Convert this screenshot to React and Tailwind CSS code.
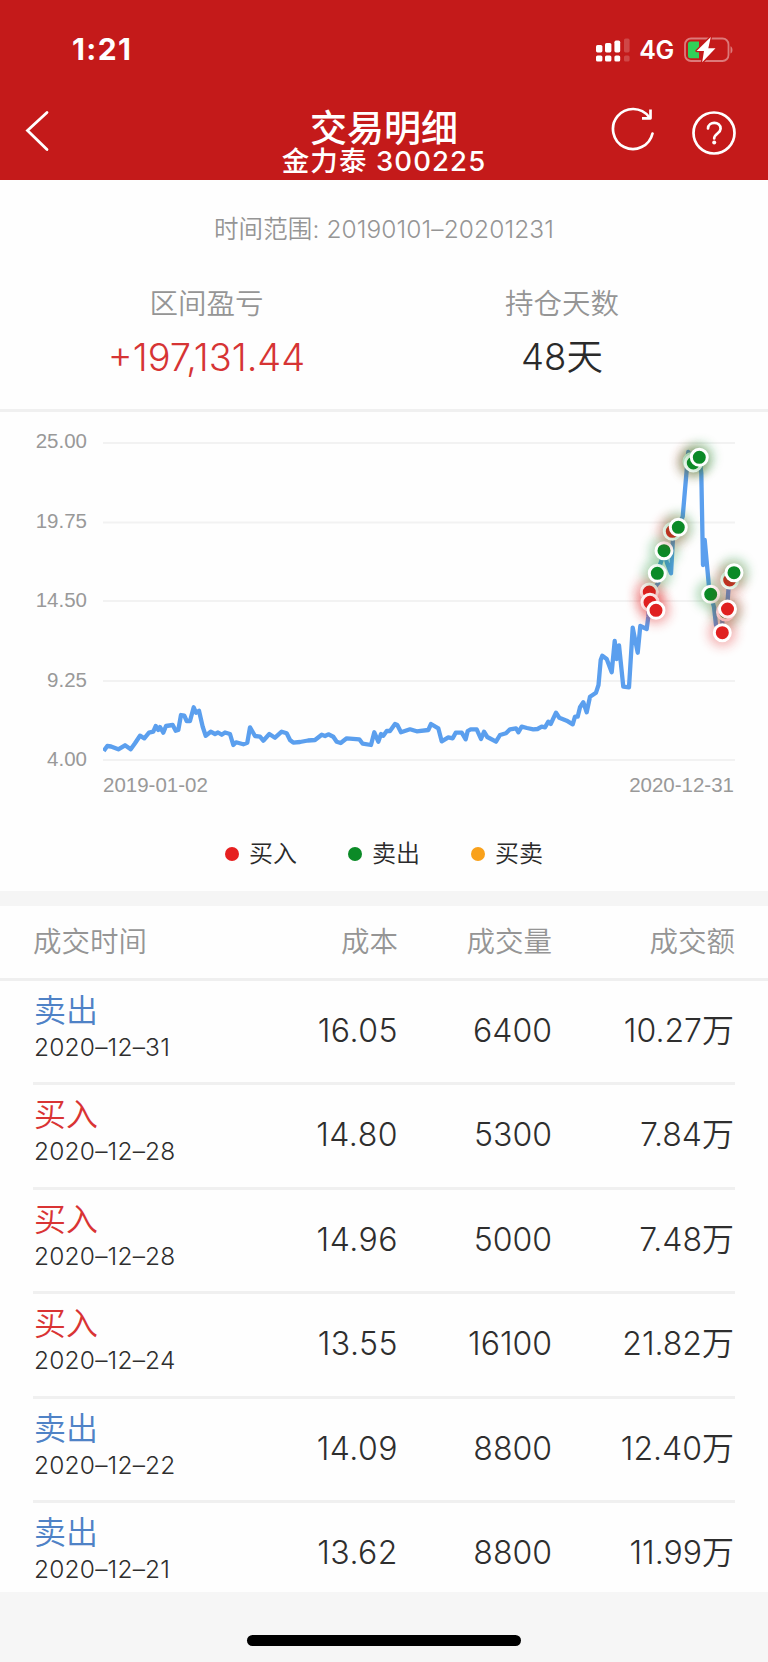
const FONT = "font-['Inter','Noto_Sans_CJK_SC',sans-serif]";

const trades = [
  { side: "sell", date: "2020–12–31", cost: "16.05", volume: "6400", amount: "10.27" },
  { side: "buy", date: "2020–12–28", cost: "14.80", volume: "5300", amount: "7.84" },
  { side: "buy", date: "2020–12–28", cost: "14.96", volume: "5000", amount: "7.48" },
  { side: "buy", date: "2020–12–24", cost: "13.55", volume: "16100", amount: "21.82" },
  { side: "sell", date: "2020–12–22", cost: "14.09", volume: "8800", amount: "12.40" },
  { side: "sell", date: "2020–12–21", cost: "13.62", volume: "8800", amount: "11.99" },
];

const gridLines = [443, 522.5, 601, 681, 760];
const yLabels = ["25.00", "19.75", "14.50", "9.25", "4.00"];

const pricePoints =
  "103.7,751 107.3,746 111,746.5 115,748 118.3,749.3 125,745.3 130.7,749.3 135,743.3 140,735.7 144.3,738.3 149,732.7 153.3,731.7 155.7,726 158.3,730 160,727 163.3,732.7 166,726 172.7,725 175.7,730.7 178.3,730 181,715 184.3,715.7 186.7,721 190,721 193.7,707.3 196,712.7 199,710.7 202.7,726.7 205.7,735.7 210.7,731.7 215,734 218,732.5 221.7,734.7 225,732.5 230,734 233.3,745 236,742.3 243.3,744.3 247.3,742.7 250,727.3 255,736 260,736.7 263.3,740.7 269.3,734 275,737.7 281.7,731.7 286.7,733.3 290,740 293.3,742.7 300,742 308,740.5 315,740 321.7,734.7 325,736 328.3,734.3 333.3,736.7 336.7,741.7 340.7,743 346.7,738.3 353,738.8 359.3,739.3 362.7,743.7 371,745 374.3,732.3 378.3,741.7 381,734 383.3,735.7 386.7,731 390,731 395,724 397.3,725 401,732.3 410,729.3 416.7,731.3 428.3,730 431,724 438.3,728.3 441.7,741.3 448.3,737.3 452.7,738.3 455.7,732.7 461.7,732.7 465.7,739.3 467.7,731 470.7,729.3 476.7,729.3 481,739 484,731.7 487.3,737 496,741.7 500,735 506,733.3 510,729.3 516,728.3 518.3,732.3 521.7,726.7 527,728 533.3,729.3 537.5,729 541.7,726.7 545,727.3 548.3,721.7 550.7,724 556,712.7 559.3,717.7 566.7,720.7 572.7,724.3 575,716.7 577.7,716.7 580,707.3 583.3,702.3 586.7,712.3 590,696.7 596,692.7 598.5,685 600.7,660 602.3,655.7 606.7,659 611.7,672.3 614.7,641 616.7,659 619,645.3 623.3,686.7 629,687.3 632.7,627.7 637.7,652.7 640.3,626 646.7,629 648.3,616.7 650,593 658.3,583 657,573 661.7,560 664,551 667,563 671,573.3 673.3,533 678,527 682.7,516.7 684.3,498 686.7,470 688.3,452 693,463 699.3,457 701.3,473 703,565 704.7,540 709.3,590 714,607 716,625 722,632.7 722.5,617 727,609 729,582 734,572.7";

const markers = [
  [649.3, 592, "buy"],
  [650, 602.3, "buy"],
  [656, 610.3, "buy"],
  [657.3, 573.3, "sell"],
  [664, 550.7, "sell"],
  [672.3, 531.3, "buy"],
  [678.3, 527.3, "sell"],
  [692, 461.5, "buy"],
  [693.3, 463, "sell"],
  [699.3, 457.3, "sell"],
  [710.7, 594.3, "sell"],
  [725.5, 612, "sell"],
  [727.5, 609, "buy"],
  [722.3, 632.7, "buy"],
  [729.7, 580, "buy"],
  [734, 572.7, "sell"],
];

const markerColor = { buy: "#e02020", sell: "#0b8a27" };

function SignalIcon() {
  return (
    <svg width="34" height="24" viewBox="0 0 34 24" fill="#fff">
      <rect x="0" y="7" width="6.4" height="7.4" rx="1.6" />
      <rect x="9" y="5" width="6.4" height="9.4" rx="1.6" />
      <rect x="18.4" y="2.6" width="5.8" height="11.8" rx="1.6" />
      <rect x="28" y="0.6" width="5.6" height="13.8" rx="1.6" opacity=".2" />
      <rect x="0" y="17.4" width="6.4" height="6.2" rx="1.6" />
      <rect x="9" y="17.4" width="6.4" height="6.2" rx="1.6" />
      <rect x="18.4" y="17.4" width="5.8" height="6.2" rx="1.6" />
      <rect x="28" y="17.4" width="5.6" height="6.2" rx="1.6" opacity=".2" />
    </svg>
  );
}

function BatteryIcon() {
  return (
    <svg width="50" height="26" viewBox="0 0 50 26" fill="none">
      <rect x="1" y="1.5" width="43.5" height="22.5" rx="6" stroke="#fff" strokeOpacity=".42" strokeWidth="1.8" />
      <path d="M46.5 9.2c2.6 1 2.6 6.4 0 7.4z" fill="#fff" fillOpacity=".42" />
      <path d="M6.5 4.5H15v16.8H6.5a2.5 2.5 0 0 1-2.5-2.5V7a2.5 2.5 0 0 1 2.5-2.5z" fill="#30d158" />
      <path
        d="M26.8 0 12.6 13.9H20L18.2 25.3 31.5 11.3H24.3z"
        fill="#fff"
        stroke="#c41a1a"
        strokeWidth="2.6"
        strokeLinejoin="round"
        paintOrder="stroke"
      />
    </svg>
  );
}

function Header() {
  return (
    <header className="h-[180px] bg-[#c41a1a] text-white">
      <div className="flex h-[98px] items-center justify-between pl-[72px] pr-[34px]">
        <span className="text-[30px] font-bold tracking-[1.4px]">1:21</span>
        <div className="flex items-center pt-[2px]">
          <SignalIcon />
          <span className="ml-[9px] mr-[10px] text-[25px] font-semibold leading-none tracking-[-0.3px]">4G</span>
          <BatteryIcon />
        </div>
      </div>
      <div className="grid grid-cols-[1fr_auto_1fr] px-[31px]">
        <svg width="26" height="42" viewBox="0 0 26 42" fill="none" className="-ml-[7px] mt-[12px]">
          <path d="M23 2.5 3.5 20.5 23 39.5" stroke="#fff" strokeWidth="2.8" strokeLinecap="round" />
        </svg>
        <div className="flex flex-col items-center pt-[12px]">
          <h1 className="text-[37px] font-medium leading-[37px]">交易明细</h1>
          <p className="mt-px whitespace-nowrap text-[27.5px] font-medium leading-[26px] tracking-[1.1px]">
            金力泰 300225
          </p>
        </div>
        <div className="flex justify-end gap-[34px]">
          <svg width="46" height="46" viewBox="0 0 46 46" fill="none" stroke="#fff" strokeWidth="2.7" className="mt-[7px]">
            <path d="M41.5 28.5A20 20 0 1 1 38 12" strokeLinecap="round" />
            <path d="M39.5 4.5v8.8H31" strokeLinejoin="round" />
          </svg>
          <svg width="46" height="46" viewBox="0 0 46 46" fill="none" stroke="#fff" strokeWidth="2.7" className="mt-[12px]">
            <circle cx="23" cy="23" r="20.5" />
            <path d="M17 18.5c.2-7.6 12.6-7.4 12.6.2 0 4.6-6.400 5-6.4 9.800" strokeLinecap="round" />
            <circle cx="23.2" cy="32.5" r="2" fill="#fff" stroke="none" />
          </svg>
        </div>
      </div>
    </header>
  );
}

function Summary() {
  return (
    <section className="h-[232px] border-b-[3px] border-[#f0f0f0] text-center">
      <p className="pt-[33px] text-[24.5px] font-[350] leading-[32px] tracking-[0.1px] text-[#959595]">
        时间范围: 20190101–20201231
      </p>
      <div className="mt-[41px] grid grid-cols-[413px_298px] font-[350]">
        <div>
          <p className="text-[28.5px] leading-[36px] text-[#959595]">区间盈亏</p>
          <p className="mt-[13px] text-[38px] leading-[44px] text-[#d63434]">+197,131.44</p>
        </div>
        <div>
          <p className="text-[28.5px] leading-[36px] text-[#959595]">持仓天数</p>
          <p className="mt-[13px] text-[36.5px] leading-[44px] text-[#2a2a2a]">48天</p>
        </div>
      </div>
    </section>
  );
}

function Chart() {
  return (
    <div className="pt-[13px] font-['Liberation_Sans',sans-serif] text-[20.5px] text-[#999]">
      <div className="flex">
        <div className="flex h-[350px] w-[103px] flex-col justify-between pb-[5px] pr-[16px] pt-[5px] text-right leading-[22px]">
          {yLabels.map((label) => (
            <span key={label}>{label}</span>
          ))}
        </div>
        <svg width="665" height="350" viewBox="103 425 665 350" fill="none">
          <defs>
            <filter id="glow" x="-100%" y="-100%" width="300%" height="300%">
              <feGaussianBlur stdDeviation="5.5" />
            </filter>
          </defs>
          {gridLines.map((y) => (
            <path key={y} d={`M103 ${y}H735`} stroke="#f2f2f2" strokeWidth="2" />
          ))}
          <polyline points={pricePoints} stroke="#5b9fee" strokeWidth="4.3" strokeLinejoin="round" />
          {markers.map(([x, y, side]) => (
            <g key={`${x}-${y}`}>
              <circle cx={x} cy={y} r="14" fill={markerColor[side]} opacity=".33" filter="url(#glow)" />
              <circle cx={x} cy={y} r="8" fill={markerColor[side]} stroke="#fff" strokeWidth="3" />
            </g>
          ))}
        </svg>
      </div>
      <div className="-mt-px flex justify-between pl-[103px] pr-[34px] leading-[22px]">
        <span>2019-01-02</span>
        <span>2020-12-31</span>
      </div>
    </div>
  );
}

function Legend() {
  return (
    <div className="mt-[42px] flex h-[32px] items-center justify-center gap-[51px] text-[24px] font-[350] text-[#2a2a2a]">
      <div className="flex items-center gap-[10px]">
        <i className="size-[14px] rounded-full bg-[#e62020]" />
        买入
      </div>
      <div className="flex items-center gap-[10px]">
        <i className="size-[14px] rounded-full bg-[#0b8a27]" />
        卖出
      </div>
      <div className="flex items-center gap-[10px]">
        <i className="size-[14px] rounded-full bg-[#f9a11b]" />
        买卖
      </div>
    </div>
  );
}

function TradeRow({ trade, last }) {
  const isBuy = trade.side === "buy";

  return (
    <li
      className={`grid h-[104.4px] grid-cols-[200px_165px_154px_1fr] text-right text-[32px] font-[350] text-[#2e2e2e] ${
        last ? "" : "border-b-[3px] border-[#f0f0f0]"
      }`}
    >
      <div className="pl-px pt-[10px] text-left">
        <p className={`text-[32px] leading-[40px] ${isBuy ? "text-[#d93434]" : "text-[#4f82c6]"}`}>
          {isBuy ? "买入" : "卖出"}
        </p>
        <p className="-mt-px text-[24.5px] leading-[34px] tracking-[0.2px]">{trade.date}</p>
      </div>
      <span className="pt-[25px] leading-[50px] tracking-[0.5px]">{trade.cost}</span>
      <span className="pt-[25px] leading-[50px]">{trade.volume}</span>
      <span className="pr-px pt-[25px] leading-[50px]">{trade.amount}万</span>
    </li>
  );
}

function App() {
  return (
    <div className={`flex h-[1662px] w-[768px] flex-col overflow-hidden bg-[#fefefe] ${FONT}`}>
      <Header />
      <Summary />
      <section className="h-[494px] shrink-0 border-b-[15px] border-[#f5f5f5]">
        <Chart />
        <Legend />
      </section>
      <div className="grid h-[75px] shrink-0 grid-cols-[200px_165px_154px_1fr] items-center border-b-[3px] border-[#efefef] px-[33px] pt-px text-right text-[28.5px] font-[350] text-[#959595]">
        <span className="text-left">成交时间</span>
        <span>成本</span>
        <span>成交量</span>
        <span>成交额</span>
      </div>
      <ul className="h-[611px] shrink-0 overflow-hidden px-[33px]">
        {trades.map((trade, i) => (
          <TradeRow key={i} trade={trade} last={i === trades.length - 1} />
        ))}
      </ul>
      <footer className="flex flex-1 items-end justify-center bg-[#f6f6f6] pb-[16px]">
        <div className="h-[11px] w-[274px] rounded-full bg-black" />
      </footer>
    </div>
  );
}

export default App;
